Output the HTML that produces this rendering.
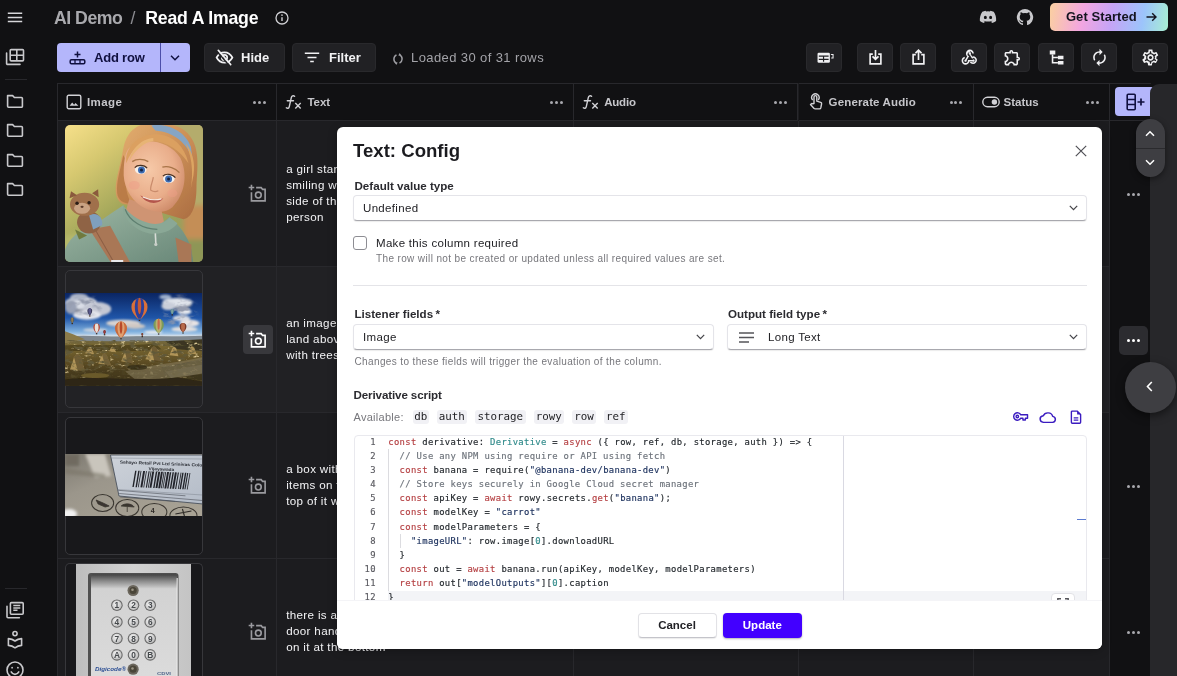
<!DOCTYPE html>
<html lang="en">
<head>
<meta charset="utf-8">
<title>Read A Image - Rowy</title>
<style>
*{box-sizing:border-box;margin:0;padding:0}
html,body{width:1177px;height:676px;overflow:hidden;background:#111113}
body{position:relative;font-family:"Liberation Sans",sans-serif;color:#e8e8ea;-webkit-font-smoothing:antialiased}
.abs{position:absolute}
svg{display:block}
/* ---------- left nav ---------- */
.navic{position:absolute;left:5px;width:20px;height:20px;fill:none;stroke:#c9c9cc;stroke-width:1.6;stroke-linejoin:round;stroke-linecap:round}
.navdiv{position:absolute;left:5px;width:22px;height:1px;background:#28282c}
/* ---------- top bar ---------- */
#title{position:absolute;left:53px;top:5px;height:26px;line-height:26px;font-size:17.700px;font-weight:700;white-space:nowrap;color:#fff;letter-spacing:.1px}
#title .dim{color:#a9a9ad}
#title .sl{color:#8c8c91;font-weight:400;padding:0 8px}
#getstarted{position:absolute;left:1050.300px;top:2.500px;width:117.800px;height:28.700px;border-radius:5px;background:linear-gradient(100deg,#fbd0a0 0%,#f3a6e0 28%,#c6a4f6 52%,#9cc4fb 78%,#a9efd2 100%);color:#14141f;font-size:13px;font-weight:700;line-height:28.700px;white-space:nowrap}
/* ---------- toolbar ---------- */
.tbtn{position:absolute;top:43px;height:29px;border-radius:4px;background:#212124;border:1px solid #29292c;color:#f1f1f3;font-size:13px;font-weight:700;line-height:27px;white-space:nowrap}
.tbtn svg{position:absolute}
.ibtn{position:absolute;top:43px;width:36px;height:29px;border-radius:4px;background:#212124;border:1px solid #29292c}
.ibtn svg{position:absolute;left:8px;top:4px;width:19px;height:19px;fill:#f1f1f3}
/* ---------- table ---------- */
#table{position:absolute;left:57px;top:83px;width:1053.200px;height:593px;background:#1c1c1f;border-left:1px solid #28282c}
.hd{position:absolute;top:0;height:38px;background:#111113;border-top:1px solid #28282c;border-bottom:1px solid #28282c;border-right:1px solid #28282c;color:#c6c6ca;font-size:11.5px;font-weight:700;line-height:36px;white-space:nowrap}
.hd .lbl{position:absolute;top:0}
.hd .dots{position:absolute;right:10.500px;top:16.500px;width:12.600px;height:3px}
.hd .dots i,.rowdots i{position:absolute;top:0;width:3px;height:3px;border-radius:50%;background:#a9a9ae}
.hd svg{position:absolute}
.vl{position:absolute;top:38px;width:1px;height:560px;background:#28282c}
.hl{position:absolute;left:0;width:1052.200px;height:1px;background:#28282c}
.thumb{position:absolute;left:6.500px;width:138px;height:138px;border:1px solid #37373b;border-radius:5px;overflow:hidden;background:#18181b}
.cam{position:absolute;left:190.300px;width:19px;height:18.600px}
.cell{position:absolute;left:228.200px;font-size:11.6px;line-height:16px;color:#f3f3f5;white-space:nowrap;letter-spacing:.35px}
.rowdots{position:absolute;left:1127px;width:13px;height:3px}
/* ---------- modal ---------- */
#modal{position:absolute;left:337px;top:126.5px;width:765px;height:522.5px;background:#fff;border-radius:6px;color:#1e1e22;overflow:hidden;box-shadow:0 2px 10px rgba(0,0,0,.25)}
#modal .lab{position:absolute;font-size:11.6px;font-weight:700;color:#2a2a2f;white-space:nowrap;line-height:14px}
#modal .sel{position:absolute;height:25.600px;border:1px solid #e4e4e9;border-bottom:1px solid #a8a8ae;border-radius:4px;background:#fff;font-size:11.500px;letter-spacing:.33px;line-height:24.600px;color:#222226;white-space:nowrap;box-shadow:0 1px 1px rgba(0,0,0,.08)}
#modal .hint{position:absolute;font-size:10px;letter-spacing:.37px;color:#77777c;white-space:nowrap;line-height:12px}
.chev{position:absolute;width:9px;height:6px;fill:none;stroke:#45454a;stroke-width:1.25}
.chip{position:absolute;top:283.200px;height:14.800px;border-radius:3px;background:#f1f1f5;font-family:"DejaVu Sans Mono","Liberation Mono",monospace;font-size:10.850px;line-height:14.800px;color:#222226;text-align:center}
#ed{position:absolute;left:16.5px;top:308px;width:733.5px;height:180px;border:1px solid #e9e9ee;border-radius:4px 4px 0 0;overflow:hidden;background:#fff}
#ed pre{position:absolute;margin:0;font-family:"DejaVu Sans Mono","Liberation Mono",monospace;font-size:8.9px;letter-spacing:.31px;line-height:14.16px;white-space:pre;color:#24292e;-webkit-text-stroke:.15px}
#ed .ln{left:0;top:-.9px;width:21.3px;text-align:right;color:#5a5a60}
#ed .code{left:33.800px;top:-.9px}
.k{color:#b54043}.s{color:#1a2f5c}.c{color:#6d737b}.t{color:#2f8a8a}.n{color:#2f8a8a}
</style>
</head>
<body>
<div id="root" style="position:absolute;left:0;top:0;width:1177px;height:676px;overflow:hidden;will-change:transform">
<!-- LEFT NAV -->
<div id="nav">
<svg class="abs" style="left:7px;top:12px;width:16px;height:12px" viewBox="0 0 16 12"><path d="M.8 1.300h14.400M.8 5.450h14.400M.8 9.600h14.400" stroke="#d6d6d9" stroke-width="1.500" fill="none"/></svg>
<svg class="navic" style="top:47px" viewBox="0 0 20 20"><path d="M6.2 2.6h11.3a1 1 0 0 1 1 1v9.3a1 1 0 0 1-1 1H6.2a1 1 0 0 1-1-1V3.6a1 1 0 0 1 1-1zM5.2 8.200h13.300M11.800 2.600v11.300M1.600 6v10.400a1 1 0 0 0 1 1H15"/></svg>
<div class="navdiv" style="top:79px"></div>
<svg class="navic" style="top:91px" viewBox="0 0 20 20"><path d="M2.6 4.6h5l1.8 1.9h7a1 1 0 0 1 1 1v7.7a1 1 0 0 1-1 1H3.6a1 1 0 0 1-1-1V4.6z"/></svg>
<svg class="navic" style="top:120.3px" viewBox="0 0 20 20"><path d="M2.6 4.6h5l1.8 1.9h7a1 1 0 0 1 1 1v7.7a1 1 0 0 1-1 1H3.6a1 1 0 0 1-1-1V4.6z"/></svg>
<svg class="navic" style="top:149.6px" viewBox="0 0 20 20"><path d="M2.6 4.6h5l1.8 1.9h7a1 1 0 0 1 1 1v7.7a1 1 0 0 1-1 1H3.6a1 1 0 0 1-1-1V4.6z"/></svg>
<svg class="navic" style="top:178.9px" viewBox="0 0 20 20"><path d="M2.6 4.6h5l1.8 1.9h7a1 1 0 0 1 1 1v7.7a1 1 0 0 1-1 1H3.6a1 1 0 0 1-1-1V4.6z"/></svg>
<div class="navdiv" style="top:588px"></div>
<svg class="navic" style="top:600px" viewBox="0 0 20 20"><path d="M6.4 2.6h10.8a1 1 0 0 1 1 1v9.6a1 1 0 0 1-1 1H6.4a1 1 0 0 1-1-1V3.6a1 1 0 0 1 1-1zM2 6.2v10.6a1 1 0 0 0 1 1h11.4"/><path d="M8.3 5.6h7M8.3 7.9h7M8.3 10.2h4.2" stroke-width="1.5" stroke-linecap="butt"/></svg>
<svg class="navic" style="top:629px" viewBox="0 0 20 20"><circle cx="10" cy="4.6" r="2.1"/><path d="M3.4 9.6c2.6.2 4.8 1 6.6 2.4 1.800-1.400 4-2.200 6.600-2.400v6.800c-2.600.2-4.800 1-6.600 2.400-1.800-1.400-4-2.200-6.600-2.400V9.600z"/></svg>
<svg class="navic" style="top:659.500px" viewBox="0 0 20 20"><circle cx="10" cy="10" r="8"/><path d="M6.200 11.900c.9 1.700 2.200 2.500 3.800 2.500s2.900-.8 3.800-2.500"/><circle cx="7.100" cy="7.700" r=".9" fill="#c9c9cc" stroke="none"/><circle cx="12.900" cy="7.700" r=".9" fill="#c9c9cc" stroke="none"/></svg>
</div>
<!-- TOP BAR -->
<div id="top">
<div id="title"><span class="dim abs" id="t1" style="left:1px;top:0;letter-spacing:-.5px">AI Demo</span><span class="abs" id="t2" style="left:77.500px;top:0;color:#8c8c91;font-weight:400">/</span><span class="abs" id="t3" style="left:92.300px;top:0;letter-spacing:-.22px">Read A Image</span></div>
<svg class="abs" style="left:274px;top:10px;width:16px;height:16px" viewBox="0 0 16 16"><circle cx="8" cy="8" r="6" fill="none" stroke="#d0d0d4" stroke-width="1.300"/><path d="M8 7.200v3.900" stroke="#d0d0d4" stroke-width="1.400"/><circle cx="8" cy="5.100" r=".85" fill="#d0d0d4"/></svg>
<svg class="abs" style="left:979px;top:9px;width:18px;height:16px" viewBox="0 0 24 20"><path fill="#c9c9cc" d="M19.600 2.900A18 18 0 0 0 15.200 1.500l-.55 1.100a16.800 16.800 0 0 0-5.300 0L8.800 1.500A18 18 0 0 0 4.400 2.900C1.600 7.100.85 11.200 1.200 15.200a18.200 18.200 0 0 0 5.500 2.800l1.150-1.900c-.65-.24-1.250-.54-1.850-.9l.45-.36c3.600 1.700 7.500 1.700 11.100 0l.45.360c-.6.360-1.200.660-1.850.9l1.150 1.900a18.200 18.200 0 0 0 5.500-2.800c.45-4.700-.75-8.700-3.200-12.300zM8.500 12.700c-1.050 0-1.950-1-1.950-2.200s.85-2.200 1.950-2.200 1.950 1 1.950 2.200-.85 2.200-1.950 2.200zm7 0c-1.050 0-1.950-1-1.950-2.200s.85-2.200 1.950-2.200 1.950 1 1.950 2.200-.85 2.200-1.950 2.200z"/></svg>
<svg class="abs" style="left:1016px;top:8px;width:18px;height:18px" viewBox="0 0 24 24"><path fill="#c9c9cc" d="M12 1.300A11 11 0 0 0 8.500 22.700c.55.100.75-.24.750-.53v-1.900c-3.050.66-3.700-1.450-3.700-1.450-.5-1.270-1.220-1.600-1.220-1.600-1-.68.080-.67.080-.67 1.100.080 1.680 1.130 1.680 1.130.98 1.680 2.570 1.200 3.200.91.100-.71.380-1.200.7-1.470-2.440-.28-5-1.220-5-5.430 0-1.200.430-2.180 1.130-2.950-.110-.28-.490-1.400.110-2.910 0 0 .920-.3 3.020 1.130a10.400 10.400 0 0 1 5.500 0c2.100-1.430 3.020-1.130 3.020-1.130.600 1.510.220 2.630.110 2.910.700.770 1.130 1.750 1.130 2.950 0 4.220-2.570 5.150-5.020 5.420.4.340.75 1.010.75 2.040v3.020c0 .29.200.640.760.530A11 11 0 0 0 12 1.300z"/></svg>
<div id="getstarted"><span class="abs" style="left:15.600px;top:0;letter-spacing:.08px">Get Started</span><svg class="abs" style="left:95.800px;top:9.400px;width:11px;height:10px" viewBox="0 0 11 10"><path d="M.5 5h9.500M6.200 1.200L10 5l-3.800 3.800" fill="none" stroke="#14141f" stroke-width="1.400"/></svg></div>
</div>
<!-- TOOLBAR -->
<div id="toolbar">
<div class="abs" style="left:57px;top:43px;width:133px;height:29px;border-radius:4px;background:#b4b6fb;color:#10103f;font-size:13px;font-weight:700;line-height:29px;white-space:nowrap">
<svg class="abs" style="left:12px;top:8px;width:17px;height:14px" viewBox="0 0 17 14"><path d="M8.500 .6v6M5.500 3.600h6" stroke="#10103f" stroke-width="1.500" fill="none"/><rect x="1.200" y="8.700" width="14.600" height="4" rx="1.200" fill="none" stroke="#10103f" stroke-width="1.500"/><path d="M6 8.700v4M11 8.700v4" stroke="#10103f" stroke-width="1.300"/></svg>
<span class="abs" style="left:37px;top:0;letter-spacing:-.2px">Add row</span>
<div class="abs" style="left:103px;top:0;width:1px;height:29px;background:#4c4eaa"></div>
<svg class="abs" style="left:113px;top:12px;width:10px;height:6px" viewBox="0 0 10 6"><path d="M1 .8l4 4 4-4" fill="none" stroke="#10103f" stroke-width="1.500"/></svg>
</div>
<div class="tbtn" style="left:204px;width:80.600px">
<svg style="left:10px;top:5px;width:19px;height:17px" viewBox="0 0 24 22"><g fill="none" stroke="#f1f1f3" stroke-width="2.200" stroke-linecap="round"><path d="M1.800 11C4 6.700 7.600 4.300 12 4.300S20 6.700 22.200 11C20 15.300 16.400 17.700 12 17.700S4 15.300 1.800 11z"/><circle cx="12" cy="11" r="3.500"/><path d="M4 1.800l16 18.400"/></g><path d="M2.300 3.200l16 18.400" stroke="#212124" stroke-width="1.800"/></svg>
<span class="abs" style="left:36px;top:0">Hide</span></div>
<div class="tbtn" style="left:292px;width:84px">
<svg style="left:11px;top:8px;width:16px;height:11px" viewBox="0 0 16 11"><path d="M.8 1.200h14.400M3.500 5.400h9M6.200 9.600h3.600" stroke="#f1f1f3" stroke-width="1.500" fill="none"/></svg>
<span class="abs" style="left:36px;top:0">Filter</span></div>
<svg class="abs" style="left:392px;top:52.500px;width:12px;height:12px" viewBox="0 0 12 12"><path d="M4.500 1.900A4.700 4.700 0 0 0 4.300 10.200M7.500 10.100A4.700 4.700 0 0 0 7.700 1.800" fill="none" stroke="#9d9da2" stroke-width="1.500"/><path d="M2.600 9.300l3.100 .2-1.400 2.400zM9.400 2.700L6.300 2.500 7.700 .1z" fill="#9d9da2"/></svg>
<div class="abs" style="left:411px;top:49px;font-size:13px;line-height:17px;color:#a3a3a8;white-space:nowrap;letter-spacing:.4px">Loaded 30 of 31 rows</div>
<div class="ibtn" style="left:806px"><svg viewBox="0 0 24 24"><rect x="3.200" y="6" width="15.600" height="12.600" rx="1.600"/><path d="M4.800 10.300h12.400M4.800 14.400h12.400M10.800 10.300v7" stroke="#212124" stroke-width="1.500" fill="none"/><path d="M20.300 8.300h2.500v4.400h-2.300M20.300 8.300v.1" stroke="#f1f1f3" stroke-width="1.300" fill="none"/></svg></div>
<div class="ibtn" style="left:857px"><svg viewBox="0 0 24 24" style="fill:none;stroke:#f1f1f3;stroke-width:2.100"><path d="M8.600 7.800H5.200v12.300h13.600V7.800h-3.400M12 2.500v11.500M8.200 10.600l3.800 3.800 3.800-3.800"/></svg></div>
<div class="ibtn" style="left:900px"><svg viewBox="0 0 24 24" style="fill:none;stroke:#f1f1f3;stroke-width:2.100"><path d="M8.600 8.300H5.200v11.800h13.600V8.300h-3.400M12 15V3M8.200 6.400L12 2.600l3.800 3.800"/></svg></div>
<div class="ibtn" style="left:951px"><svg viewBox="0 0 24 24"><path d="M10 15h5.880c.27-.31.67-.5 1.120-.5.830 0 1.500.67 1.500 1.500s-.67 1.500-1.500 1.500c-.44 0-.84-.19-1.120-.5H11.900c-.46 2.280-2.480 4-4.900 4-2.760 0-5-2.240-5-5 0-2.420 1.720-4.440 4-4.900v2.070C4.840 13.580 4 14.700 4 16c0 1.650 1.350 3 3 3s3-1.350 3-3v-1zm2.500-11c1.650 0 3 1.350 3 3h2c0-2.760-2.240-5-5-5s-5 2.240-5 5c0 1.430.6 2.710 1.550 3.620l-2.350 3.900c-.68.140-1.200.750-1.200 1.480 0 .830.670 1.500 1.500 1.500s1.500-.67 1.500-1.500c0-.16-.020-.31-.070-.450l3.380-5.630C10.490 10.610 9.500 9.420 9.500 8c0-1.650 1.350-3 3-3zm4.500 9c-.64 0-1.230.2-1.720.54l-3.050-5.070C11.530 8.350 11 7.740 11 7c0-.830.670-1.500 1.500-1.500S14 6.170 14 7c0 .15-.20.290-.60.430l2.190 3.650c.28-.50.570-.80.870-.80 2.760 0 5 2.240 5 5s-2.240 5-5 5c-1.850 0-3.470-1.010-4.330-2.500h2.670c.48.320 1.050.5 1.660.5 1.650 0 3-1.350 3-3s-1.350-3-3-3z"/></svg></div>
<div class="ibtn" style="left:994px"><svg viewBox="0 0 24 24"><path d="M10.500 4.500c.28 0 .5.220.5.5v2h6v6h2c.28 0 .5.220.5.5s-.22.5-.5.5h-2v6h-2.120c-.68-1.750-2.390-3-4.380-3s-3.700 1.250-4.380 3H4v-2.120c1.750-.68 3-2.390 3-4.380 0-1.990-1.240-3.700-2.990-4.380L4 7h6V5c0-.28.220-.5.500-.5m0-2C9.120 2.500 8 3.620 8 5H4c-1.100 0-1.990.9-1.990 2v3.800h.290c1.490 0 2.700 1.210 2.700 2.700s-1.210 2.700-2.700 2.700H2V20c0 1.100.9 2 2 2h3.800v-.3c0-1.490 1.210-2.700 2.700-2.700s2.700 1.210 2.700 2.700v.3H17c1.100 0 2-.9 2-2v-4c1.380 0 2.500-1.120 2.500-2.500S20.380 11 19 11V7c0-1.100-.9-2-2-2h-4c0-1.380-1.120-2.500-2.500-2.500z"/></svg></div>
<div class="ibtn" style="left:1038px"><svg viewBox="0 0 24 24"><path d="M3.500 3.200h7v5h-7zM13.800 9.800h7v4.400h-7zM13.800 16.500h7v4.400h-7z"/><path d="M7 8.200v10.500h6.800M7 12h6.800" fill="none" stroke="#f1f1f3" stroke-width="2"/></svg></div>
<div class="ibtn" style="left:1081px"><svg viewBox="0 0 24 24"><path d="M12 4V1L8 5l4 4V6c3.310 0 6 2.690 6 6 0 1.010-.25 1.970-.7 2.800l1.460 1.460C19.540 15.030 20 13.570 20 12c0-4.420-3.580-8-8-8zm0 14c-3.310 0-6-2.690-6-6 0-1.010.25-1.970.7-2.800L5.240 7.740C4.460 8.970 4 10.430 4 12c0 4.420 3.580 8 8 8v3l4-4-4-4v3z" transform="translate(24 0) scale(-1 1)"/></svg></div>
<div class="ibtn" style="left:1132px"><svg viewBox="0 0 24 24"><path d="M19.430 12.980c.04-.32.070-.64.070-.98 0-.34-.03-.66-.07-.98l2.110-1.650c.19-.15.240-.42.120-.64l-2-3.460c-.09-.16-.26-.25-.44-.25-.06 0-.12.010-.17.030l-2.490 1c-.52-.4-1.080-.73-1.690-.98l-.38-2.650C14.460 2.180 14.250 2 14 2h-4c-.25 0-.46.180-.49.420l-.38 2.650c-.61.250-1.170.59-1.690.98l-2.490-1c-.06-.02-.12-.03-.18-.03-.17 0-.34.090-.43.250l-2 3.460c-.13.220-.7.490.12.640l2.110 1.650c-.4.320-.7.650-.7.980 0 .330.030.660.070.98l-2.110 1.650c-.19.150-.24.420-.12.640l2 3.460c.9.160.26.250.44.250.06 0 .12-.1.170-.03l2.490-1c.52.4 1.080.730 1.690.98l.38 2.650c.3.240.24.420.49.420h4c.25 0 .46-.18.490-.42l.38-2.650c.61-.25 1.170-.59 1.690-.98l2.490 1c.6.020.12.030.18.030.17 0 .34-.9.430-.25l2-3.460c.12-.22.070-.49-.12-.64l-2.110-1.650zm-1.980-1.710c.4.310.5.520.5.730 0 .210-.2.430-.5.730l-.14 1.130.89.700 1.080.84-.7 1.210-1.270-.51-1.040-.42-.9.680c-.43.320-.84.560-1.250.73l-1.060.43-.16 1.130-.2 1.350h-1.400l-.19-1.350-.16-1.130-1.060-.43c-.43-.18-.83-.41-1.230-.71l-.91-.7-1.060.43-1.270.51-.7-1.210 1.080-.84.890-.7-.14-1.130c-.03-.31-.05-.54-.05-.74s.02-.43.05-.73l.14-1.130-.89-.7-1.080-.84.700-1.210 1.270.51 1.040.42.900-.68c.43-.32.840-.56 1.250-.73l1.060-.43.160-1.130.2-1.350h1.390l.19 1.350.16 1.130 1.060.43c.43.180.83.410 1.230.71l.91.700 1.060-.43 1.270-.51.700 1.210-1.070.85-.89.700.14 1.130zM12 8c-2.210 0-4 1.790-4 4s1.790 4 4 4 4-1.790 4-4-1.790-4-4-4zm0 6c-1.100 0-2-.9-2-2s.9-2 2-2 2 .9 2 2-.9 2-2 2z"/></svg></div>
</div>
<!-- TABLE -->
<div id="table">
<div class="hd" style="left:0;width:219.200px"><svg style="left:8px;top:10px;width:16px;height:16px" viewBox="0 0 16 16"><rect x="1.200" y="1.200" width="13.600" height="13.600" rx="1.500" fill="none" stroke="#d2d2d6" stroke-width="1.400"/><path d="M3.600 11.800l2.600-3.300 1.900 2.300 1.400-1.700 2.900 2.700z" fill="#d2d2d6"/></svg><span class="lbl" style="left:29px;letter-spacing:.4px">Image</span><span class="dots"><i style="left:0"></i><i style="left:4.800px"></i><i style="left:9.600px"></i></span></div>
<div class="hd" style="left:219.200px;width:297px"><svg style="left:8.300px;top:10px;width:18px;height:16px" viewBox="0 0 18 16"><path d="M9.600 2.300C8.300 1.200 6.700 1.700 6.300 3.600L4.300 12.600C3.900 14.400 2.500 14.700 1.300 13.800M2.300 6.800h6.200" fill="none" stroke="#d2d2d6" stroke-width="1.400" stroke-linecap="round"/><path d="M10.300 9l5.400 5.400M15.700 9l-5.400 5.400" fill="none" stroke="#d2d2d6" stroke-width="1.400"/></svg><span class="lbl" style="left:30.200px">Text</span><span class="dots"><i style="left:0"></i><i style="left:4.800px"></i><i style="left:9.600px"></i></span></div>
<div class="hd" style="left:516.200px;width:224.300px"><svg style="left:8.300px;top:10px;width:18px;height:16px" viewBox="0 0 18 16"><path d="M9.600 2.300C8.300 1.200 6.700 1.700 6.300 3.600L4.300 12.600C3.900 14.400 2.500 14.700 1.300 13.800M2.300 6.800h6.200" fill="none" stroke="#d2d2d6" stroke-width="1.400" stroke-linecap="round"/><path d="M10.300 9l5.400 5.400M15.700 9l-5.400 5.400" fill="none" stroke="#d2d2d6" stroke-width="1.400"/></svg><span class="lbl" style="left:30px;letter-spacing:-.2px">Audio</span><span class="dots"><i style="left:0"></i><i style="left:4.800px"></i><i style="left:9.600px"></i></span></div>
<div class="hd" style="left:740.500px;width:175.100px"><svg style="left:9.300px;top:8.200px;width:16px;height:18px" viewBox="0 0 16 18"><g fill="none" stroke="#d2d2d6" stroke-width="1.400" stroke-linejoin="round" stroke-linecap="round"><path d="M4.300 7.600A3.700 3.700 0 1 1 10.500 7.600"/><path d="M6 11.500V5a1.400 1.400 0 0 1 2.800 0v4.200l3.900 1.100a1.300 1.300 0 0 1 .9 1.500l-.8 4.100a1.300 1.300 0 0 1-1.300 1H7.200a1.500 1.500 0 0 1-1.100-.5l-3.600-3.800.7-.7a1.100 1.100 0 0 1 1.300-.2z"/></g></svg><span class="lbl" style="left:30.100px;letter-spacing:.15px">Generate Audio</span><span class="dots"><i style="left:0"></i><i style="left:4.800px"></i><i style="left:9.600px"></i></span></div>
<div class="hd" style="left:915.600px;width:136.600px"><svg style="left:8px;top:12.200px;width:18px;height:12px" viewBox="0 0 18 12"><rect x=".8" y="1.300" width="16.400" height="9.400" rx="4.700" fill="none" stroke="#d2d2d6" stroke-width="1.400"/><circle cx="12.400" cy="6" r="2.700" fill="#d2d2d6"/></svg><span class="lbl" style="left:29.900px">Status</span><span class="dots"><i style="left:0"></i><i style="left:4.800px"></i><i style="left:9.600px"></i></span></div>
<div class="hd" style="left:1052.200px;width:41px;border-right:0"></div>
<div class="abs" style="left:0;top:184px;width:1052.200px;height:145px;background:#212124"></div>
<div class="vl" style="left:218.200px"></div><div class="vl" style="left:515.200px"></div><div class="vl" style="left:739.500px"></div><div class="vl" style="left:914.600px"></div><div class="vl" style="left:1051.200px"></div>
<div class="hl" style="top:183px"></div><div class="hl" style="top:329px"></div><div class="hl" style="top:475px"></div>
<!-- row 1 -->
<div class="thumb" id="th1" style="border:0;left:7px;top:41.500px;width:137.500px;height:137.500px"><svg width="137.500" height="137.500" viewBox="0 0 137 137">
<defs>
<linearGradient id="g1bg" x1="0" y1="0" x2=".75" y2="1"><stop offset="0" stop-color="#f6e08a"/><stop offset=".26" stop-color="#d6c870"/><stop offset=".58" stop-color="#a2a65a"/><stop offset="1" stop-color="#949d5e"/></linearGradient>
<linearGradient id="g1hair" x1="0" y1="0" x2="1" y2="1"><stop offset="0" stop-color="#e4b070"/><stop offset=".5" stop-color="#cc9058"/><stop offset="1" stop-color="#aa6c40"/></linearGradient>
<radialGradient id="g1face" cx=".42" cy=".4" r=".7"><stop offset="0" stop-color="#f6c9a8"/><stop offset=".6" stop-color="#e9ad8a"/><stop offset="1" stop-color="#c98564"/></radialGradient>
<linearGradient id="g1hood" x1="0" y1="0" x2="1" y2="1"><stop offset="0" stop-color="#9db7a4"/><stop offset="1" stop-color="#678677"/></linearGradient>
<filter id="b1" x="-5%" y="-5%" width="110%" height="110%"><feGaussianBlur stdDeviation=".7"/></filter>
<filter id="b1s" x="-5%" y="-5%" width="110%" height="110%"><feGaussianBlur stdDeviation="2.500"/></filter>
</defs>
<rect width="137" height="137" fill="url(#g1bg)"/>
<g filter="url(#b1s)"><rect x="108" y="-4" width="34" height="84" fill="#b4ac6c"/><rect x="118" y="80" width="24" height="34" fill="#c48e56"/><rect x="118" y="114" width="24" height="30" fill="#8e9656"/><ellipse cx="10" cy="118" rx="14" ry="10" fill="#b5b86a"/></g>
<g filter="url(#b1)">
<!-- hair back -->
<path d="M88 -2C70 -2 61 8 58 24C55 42 50 54 50.500 66C51 77 58 81 67 79L118 94C127 92 131 80 131 62C132 40 135 22 122 8C114 0 102 -2 88 -2z" fill="url(#g1hair)"/>
<path d="M58 30C55 46 51 56 52 68C53 76 60 79 66 78C60 68 59 52 62 38z" fill="#b0703f" opacity=".7"/>
<!-- headband -->
<path d="M86 .5C102 -2 120 6 125.500 22L127 34C122 18 108 7 90 5.500z" fill="#86a5c4"/>
<path d="M120 18C128 34 128 54 124 70L128 50C130 38 127 26 120 18z" fill="#dca562"/>
<!-- neck -->
<path d="M64 74L96 84L100 104L74 106L60 88z" fill="#cf9473"/>
<!-- face -->
<path d="M63 24C74 11 104 14 115 33C123 50 119 70 107 82C99 89 86 87 76 81C64 73 57.500 59 58.500 45C59 35 60 28 63 24z" fill="url(#g1face)"/>
<!-- fringe -->
<path d="M61 32C64 17 78 8 94 9.500C108 11 119 21 123 38C114 25 102 17 88 16C76 16 67 23 61 38z" fill="#dba060"/>
<path d="M88 16C80 17 70 24 64 36C66 24 76 14 88 13z" fill="#e7b475"/>
<!-- brows, eyes -->
<path d="M67 36.500C71 33.500 78 33.500 83 36.500" stroke="#a87448" stroke-width="1.300" fill="none"/>
<path d="M97 42C103 40.500 110 43 114 47.500" stroke="#a87448" stroke-width="1.300" fill="none"/>
<ellipse cx="75.500" cy="44.500" rx="5.800" ry="4.200" fill="#f6f1ec"/><circle cx="76.200" cy="44.800" r="3.500" fill="#3c6cb2"/><circle cx="76.200" cy="44.800" r="1.500" fill="#132240"/><path d="M69.500 42.500C72 39.500 79 39.500 81.800 43" stroke="#4a3020" stroke-width="1.200" fill="none"/>
<ellipse cx="103.500" cy="53.500" rx="5.800" ry="4.200" fill="#f6f1ec"/><circle cx="103.200" cy="53.800" r="3.500" fill="#3c6cb2"/><circle cx="103.200" cy="53.800" r="1.500" fill="#132240"/><path d="M97.500 51C100 48 107 48.500 110 52.500" stroke="#4a3020" stroke-width="1.200" fill="none"/>
<!-- nose / mouth -->
<path d="M88 52C87 58 84.500 62 85.500 65C88 66.500 91 66.500 93 65.500" stroke="#c98b6b" stroke-width="1.200" fill="none"/>
<path d="M75 70C81 74 90 76.500 98 73C93 80 81 79 75 70z" fill="#b4564c"/><path d="M77.500 71.800C83 74.300 90 75.300 96 73.600" stroke="#f5e9e1" stroke-width="1.100" fill="none"/>
<ellipse cx="69" cy="60" rx="5.500" ry="4.200" fill="#ee9e88" opacity=".5"/><ellipse cx="107" cy="68" rx="5" ry="4" fill="#ee9e88" opacity=".45"/>
<!-- hoodie -->
<path d="M-2 137C-2 118 10 106 30 99L58 80C62 92 76 102 94 100L104 92C114 100 122 110 126 124L128 139z" fill="url(#g1hood)"/>
<path d="M58 80C56 90 66 104 84 108C98 110 108 104 112 98L104 92C98 100 88 100 78 96C68 92 62 86 58 80z" fill="#8aa896"/>
<path d="M60 84C64 96 78 104 92 104" stroke="#5f7f70" stroke-width="1.200" fill="none"/>
<path d="M90 108L90.500 118" stroke="#d7dcd6" stroke-width="1.600"/><circle cx="90.500" cy="119" r="1.600" fill="#c9cfc9"/>
<!-- straps -->
<path d="M24.500 104L45 100.500L66 139L47 139z" fill="#a97757"/><path d="M30 104L50 139" stroke="#8c5f44" stroke-width="1" fill="none"/>
<path d="M110 112L126 119L126 139L113.500 139z" fill="#a97757"/>
<!-- squirrel -->
<ellipse cx="24" cy="97" rx="12" ry="11" fill="#8f6345"/>
<path d="M24 90C32 86 38 92 37 100L28 104z" fill="#7f9fbe"/>
<ellipse cx="19.500" cy="79" rx="14.500" ry="11.500" fill="#a06f4c"/>
<path d="M4.500 73L6 66L12 70zM27 68L33 64L33.500 72z" fill="#8a5a3c"/>
<ellipse cx="17" cy="83" rx="8" ry="5.500" fill="#c9a283"/>
<circle cx="12" cy="78" r="1.700" fill="#2a1c14"/><circle cx="24" cy="77.500" r="1.700" fill="#2a1c14"/><ellipse cx="17" cy="81.500" rx="1.600" ry="1.100" fill="#5a3a2a"/>
<path d="M10 104L22 110L14 114z" fill="#6f7a3e"/>
</g>
<rect x="46" y="134.500" width="12" height="3" fill="#e9e9ec"/>
</svg></div>
<svg class="cam" style="top:101.200px" viewBox="0 0 20 20"><g fill="none" stroke="#9a9a9f" stroke-width="1.750"><path d="M3.500 .8v6M.5 3.800h6"/><path d="M3.500 8.800v9.400h14.700V5.800h-2.700L14 3.900H8.500"/><circle cx="10.900" cy="11.900" r="3.100"/></g></svg>
<div class="cell" style="top:78.300px">a girl standing and<br>smiling with a cat on the<br>side of the shoulder of a<br>person</div>
<!-- row 2 -->
<div class="thumb" id="th2" style="top:187.300px;background:#222225;overflow:visible"><svg width="137.500" height="92.500" viewBox="0 0 137 92" preserveAspectRatio="none" style="position:absolute;left:-.6px;top:21.800px">
<defs>
<linearGradient id="g2sky" x1="0" y1="0" x2="0" y2="1"><stop offset="0" stop-color="#0a2563"/><stop offset=".55" stop-color="#1f55a8"/><stop offset=".85" stop-color="#7fb0de"/><stop offset="1" stop-color="#dfe9f2"/></linearGradient>
<linearGradient id="g2land" x1="0" y1="0" x2="0" y2="1"><stop offset="0" stop-color="#66644a"/><stop offset=".18" stop-color="#7a6832"/><stop offset=".55" stop-color="#5a4a22"/><stop offset="1" stop-color="#2a2210"/></linearGradient>
<filter id="b2" x="-10%" y="-10%" width="120%" height="120%"><feGaussianBlur stdDeviation="1.300"/></filter>
<filter id="b2s" x="-5%" y="-5%" width="110%" height="110%"><feGaussianBlur stdDeviation=".45"/></filter><filter id="n2d" x="0" y="0" width="100%" height="100%"><feTurbulence type="fractalNoise" baseFrequency=".14 .28" numOctaves="3" seed="4"/><feColorMatrix values="0 0 0 0 .12  0 0 0 0 .1  0 0 0 0 .04  2.200 2.200 2.200 0 -3.300"/></filter><filter id="n2l" x="0" y="0" width="100%" height="100%"><feTurbulence type="fractalNoise" baseFrequency=".18 .34" numOctaves="3" seed="9"/><feColorMatrix values="0 0 0 0 .78  0 0 0 0 .64  0 0 0 0 .34  2.200 2.200 2.200 0 -3.700"/></filter><filter id="n2c" x="-10%" y="-10%" width="120%" height="120%"><feTurbulence type="fractalNoise" baseFrequency=".09 .16" numOctaves="3" seed="2" result="t"/><feColorMatrix in="t" values="0 0 0 0 .3  0 0 0 0 .33  0 0 0 0 .42  2 2 2 0 -3" result="c"/><feGaussianBlur in="SourceAlpha" stdDeviation="2" result="m"/><feComposite in="c" in2="m" operator="in"/></filter>
</defs>
<rect width="137" height="45" fill="url(#g2sky)"/>
<g filter="url(#b2)">
<ellipse cx="18" cy="14" rx="17" ry="7" fill="#5e6478"/><ellipse cx="112" cy="12" rx="14" ry="4.500" fill="#6a7288"/><ellipse cx="16" cy="10" rx="16" ry="6.500" fill="#d9dde6"/><ellipse cx="32" cy="16" rx="14" ry="7" fill="#c4c8d4"/><ellipse cx="22" cy="22" rx="14" ry="4.500" fill="#e6e8ee"/><ellipse cx="14" cy="4" rx="9" ry="3.500" fill="#aeb6c8"/><ellipse cx="6" cy="14" rx="6" ry="7" fill="#9aa2b6"/>
<ellipse cx="112" cy="9.500" rx="15" ry="4.500" fill="#dfe3ea"/><ellipse cx="103" cy="13" rx="7" ry="4" fill="#c9ced9"/><ellipse cx="119" cy="18.500" rx="7" ry="3" fill="#e4e7ed"/><ellipse cx="116" cy="25" rx="9" ry="2.800" fill="#d8dce4"/><ellipse cx="124" cy="30" rx="10" ry="3.500" fill="#e9e4e4"/><ellipse cx="119" cy="36" rx="13" ry="2.500" fill="#e6e2e0"/><ellipse cx="100" cy="4" rx="6" ry="2.500" fill="#9fb0cc"/>
<ellipse cx="58" cy="30" rx="17" ry="3.500" fill="#d6d2d0"/><ellipse cx="70" cy="33" rx="10" ry="2.500" fill="#cfc8c2"/><ellipse cx="30" cy="37" rx="12" ry="2" fill="#c9d2de"/><ellipse cx="88" cy="39" rx="9" ry="1.800" fill="#e3e8ee"/>
</g>
<ellipse cx="20" cy="13" rx="18" ry="9" filter="url(#n2c)"/><ellipse cx="114" cy="18" rx="16" ry="15" filter="url(#n2c)"/><rect y="41.500" width="137" height="3" fill="#cfdbe8" opacity=".9"/>
<rect y="43.500" width="137" height="48.500" fill="url(#g2land)"/>
<g filter="url(#b2s)">
<path d="M0 43.500C20 41 40 44 60 43.500C85 42.500 110 44 137 42.500V48C110 47 60 49 0 47z" fill="#7f8890"/>
<path d="M0 38L8 41L20 46L0 50z" fill="#8a7a4a"/>
<path d="M100 48L137 46V58L112 56z" fill="#3a3620"/><path d="M96 74L137 66V92H104z" fill="#2c281a"/><path d="M100 78L137 71V80L106 85z" fill="#7a756a" opacity=".8"/><path d="M0 52C30 50 60 54 90 50L96 56C60 60 30 56 0 58z" fill="#3a3218" opacity=".6"/>
<rect x="0" y="48" width="137" height="36" filter="url(#n2l)"/><g fill="#b09458"><path d="M5 76L9 64C11 60 14 60 16 64L20 78z"/><path d="M33 70L37 62C39 59 41 60 42 63L46 72z"/><path d="M56 68L60 58C62 55 64 56 65 59L68 70z"/><path d="M80 66L86 55C88 52 91 53 92 57L96 68z"/><path d="M104 62L107 55C108 53 110 53 111 56L113 63z"/><path d="M122 60L125 54C126 52 128 53 129 55L131 61z"/><path d="M20 60L23 55C24 53 26 54 27 56L29 61z"/><path d="M44 58L46 54C47 53 48 53 49 55L51 59z"/></g>
<g fill="#3a3018"><path d="M9 64C11 60 14 60 16 64L20 78L13 78z" opacity=".55"/><path d="M60 58C62 55 64 56 65 59L68 70L62 70z" opacity=".55"/><path d="M86 55C88 52 91 53 92 57L96 68L89 68z" opacity=".55"/><path d="M37 62C39 59 41 60 42 63L46 72L40 72z" opacity=".5"/></g>
<rect x="0" y="47" width="137" height="45" filter="url(#n2d)"/><path d="M0 80C20 74 50 78 80 76C100 75 120 70 137 66V92H0z" fill="#4a3e1e" opacity=".6"/>
<path d="M60 78C80 72 110 70 137 64V80C110 84 90 88 70 86z" fill="#8a8060" opacity=".55"/>
<path d="M0 86C30 82 70 88 112 84L137 88V92H0z" fill="#2e2612"/>
<ellipse cx="72" cy="74" rx="10" ry="2.500" fill="#2e2612" opacity=".7"/><ellipse cx="30" cy="82" rx="14" ry="2.500" fill="#6a5a2c"/>
<g><path d="M66.2 13.8A8 8.6 0 1 1 82.2 13.8C82.2 19.82 77.0 23.689999999999998 76.2 25.41L72.2 25.41C71.4 23.689999999999998 66.2 19.82 66.2 13.8z" fill="#d8703a"/><path d="M71.4 5.458000000000002C68.2 11.22 69.4 20.68 73.0 25.41L75.4 25.41C79.0 20.68 80.2 11.22 77.0 5.458000000000002z" fill="#2a3f9e"/><ellipse cx="74.2" cy="12.940000000000001" rx="1.76" ry="8.17" fill="#c85a30"/><rect x="73.5" y="26.7" width="1.400" height="1.200" fill="#3a2a1a"/></g><g><path d="M49.8 35A6 6.6 0 1 1 61.8 35C61.8 39.62 57.9 42.589999999999996 57.3 43.91L54.3 43.91C53.699999999999996 42.589999999999996 49.8 39.62 49.8 35z" fill="#c8683a"/><path d="M53.699999999999996 28.598C51.3 33.02 52.199999999999996 40.28 54.9 43.91L56.699999999999996 43.91C59.4 40.28 60.3 33.02 57.9 28.598z" fill="#e0a070"/><ellipse cx="55.8" cy="34.34" rx="1.32" ry="6.27" fill="#b84a2a"/><rect x="55.099999999999994" y="44.9" width="1.400" height="1.200" fill="#3a2a1a"/></g><g><path d="M88.1 31.5A5.2 5.8 0 1 1 98.5 31.5C98.5 35.56 95.11999999999999 38.17 94.6 39.33L92.0 39.33C91.48 38.17 88.1 35.56 88.1 31.5z" fill="#7a9a5a"/><path d="M91.48 25.874000000000002C89.39999999999999 29.76 90.17999999999999 36.14 92.52 39.33L94.08 39.33C96.42 36.14 97.2 29.76 95.11999999999999 25.874000000000002z" fill="#b8b070"/><ellipse cx="93.3" cy="30.92" rx="1.1440000000000001" ry="5.51" fill="#c86a4a"/><rect x="92.6" y="40.2" width="1.400" height="1.200" fill="#3a2a1a"/></g><g><path d="M28.2 34.2A3.3 3.8 0 1 1 34.8 34.2C34.8 36.86 32.655 38.57 32.325 39.330000000000005L30.675 39.330000000000005C30.345 38.57 28.2 36.86 28.2 34.2z" fill="#b84a3a"/><path d="M30.345 30.514000000000003C29.025 33.06 29.52 37.24 31.005 39.330000000000005L31.995 39.330000000000005C33.48 37.24 33.975 33.06 32.655 30.514000000000003z" fill="#e8e0d8"/><rect x="30.8" y="39.900000000000006" width="1.400" height="1.200" fill="#3a2a1a"/></g><g><path d="M114.19999999999999 33.6A3.4 3.7 0 1 1 121.0 33.6C121.0 36.19 118.78999999999999 37.855000000000004 118.44999999999999 38.595L116.75 38.595C116.41 37.855000000000004 114.19999999999999 36.19 114.19999999999999 33.6z" fill="#7a3a2a"/><path d="M116.41 30.011000000000003C115.05 32.49 115.55999999999999 36.56 117.08999999999999 38.595L118.11 38.595C119.64 36.56 120.14999999999999 32.49 118.78999999999999 30.011000000000003z" fill="#b86a4a"/><rect x="116.89999999999999" y="39.150000000000006" width="1.400" height="1.200" fill="#3a2a1a"/></g><g><path d="M22.3 18A2.4 2.8 0 1 1 27.099999999999998 18C27.099999999999998 19.96 25.54 21.22 25.3 21.78L24.099999999999998 21.78C23.86 21.22 22.3 19.96 22.3 18z" fill="#3a3a5a"/><path d="M23.86 15.284C22.9 17.16 23.259999999999998 20.24 24.34 21.78L25.06 21.78C26.14 20.24 26.5 17.16 25.54 15.284z" fill="#5a5a8a"/><rect x="24.0" y="22.2" width="1.400" height="1.200" fill="#3a2a1a"/></g><g><path d="M5.4 26.5A1.8 2.2 0 1 1 9.0 26.5C9.0 28.04 7.83 29.03 7.65 29.47L6.75 29.47C6.57 29.03 5.4 28.04 5.4 26.5z" fill="#5a5a4a"/><path d="M6.57 24.366C5.85 25.84 6.12 28.26 6.93 29.47L7.470000000000001 29.47C8.280000000000001 28.26 8.55 25.84 7.83 24.366z" fill="#8a7a5a"/><rect x="6.5" y="29.8" width="1.400" height="1.200" fill="#3a2a1a"/></g><g><path d="M38.1 38.5A1.3 1.6 0 1 1 40.699999999999996 38.5C40.699999999999996 39.62 39.855 40.34 39.725 40.66L39.074999999999996 40.66C38.945 40.34 38.1 39.62 38.1 38.5z" fill="#7a2a2a"/><path d="M38.945 36.948C38.425 38.02 38.62 39.78 39.205 40.66L39.595 40.66C40.18 39.78 40.375 38.02 39.855 36.948z" fill="#9a3a3a"/><rect x="38.699999999999996" y="40.9" width="1.400" height="1.200" fill="#3a2a1a"/></g><g><path d="M105.1 18.2A1.7 2 0 1 1 108.5 18.2C108.5 19.599999999999998 107.395 20.5 107.225 20.9L106.375 20.9C106.205 20.5 105.1 19.599999999999998 105.1 18.2z" fill="#5a8a8a"/><path d="M106.205 16.259999999999998C105.52499999999999 17.599999999999998 105.78 19.8 106.545 20.9L107.05499999999999 20.9C107.82 19.8 108.075 17.599999999999998 107.395 16.259999999999998z" fill="#7aa0a0"/><rect x="106.1" y="21.2" width="1.400" height="1.200" fill="#3a2a1a"/></g><g><path d="M76 41A1 1.2 0 1 1 78 41C78 41.84 77.35 42.38 77.25 42.62L76.75 42.62C76.65 42.38 76 41.84 76 41z" fill="#6a3a2a"/><path d="M76.65 39.836C76.25 40.64 76.4 41.96 76.85 42.62L77.15 42.62C77.6 41.96 77.75 40.64 77.35 39.836z" fill="#8a4a3a"/><rect x="76.3" y="42.8" width="1.400" height="1.200" fill="#3a2a1a"/></g>
</g>
</svg></div>
<div class="abs" style="left:185.200px;top:241.500px;width:30px;height:29.300px;border-radius:4px;background:#38383c"></div>
<svg class="cam" style="top:247.200px" viewBox="0 0 20 20"><g fill="none" stroke="#ffffff" stroke-width="1.750"><path d="M3.500 .8v6M.5 3.800h6"/><path d="M3.500 8.800v9.400h14.700V5.800h-2.700L14 3.900H8.500"/><circle cx="10.900" cy="11.900" r="3.100"/></g></svg>
<div class="cell" style="top:232.250px">an image of hot air balloons over a<br>land above the mountains<br>with trees and rocks</div>
<!-- row 3 -->
<div class="thumb" id="th3" style="top:333.500px;overflow:visible"><svg width="137.500" height="62" viewBox="0 0 137 62" preserveAspectRatio="none" style="position:absolute;left:-.6px;top:36.800px">
<defs>
<linearGradient id="g3bg" x1="0" y1="0" x2="1" y2="1"><stop offset="0" stop-color="#7d7970"/><stop offset=".35" stop-color="#9b968b"/><stop offset="1" stop-color="#aaa496"/></linearGradient>
<linearGradient id="g3lab" x1="0" y1="0" x2="1" y2="1"><stop offset="0" stop-color="#cdd2d9"/><stop offset="1" stop-color="#b4bcc8"/></linearGradient>
<filter id="b3" x="-5%" y="-5%" width="110%" height="110%"><feGaussianBlur stdDeviation=".4"/></filter>
<filter id="b3s" x="-10%" y="-10%" width="120%" height="120%"><feGaussianBlur stdDeviation="1.800"/></filter>
</defs>
<rect width="137" height="62" fill="url(#g3bg)"/>
<g filter="url(#b3s)"><path d="M20 0L40 0L46 22L30 24z" fill="#c9c5bc"/><path d="M0 14L40 20L40 24L0 20z" fill="#7a7468" opacity=".6"/><ellipse cx="4" cy="60" rx="8" ry="5" fill="#f1f1f1"/><rect x="0" y="0" width="14" height="12" fill="#6f6a60"/></g>
<g filter="url(#b3)">
<path d="M45.300 1L137.500 1L137.500 50L53.800 42z" fill="url(#g3lab)" stroke="#4a515c" stroke-width=".9"/>
<path d="M46.500 4L137 5M52 35.500L137 41" stroke="#6d7580" stroke-width=".5" fill="none" opacity=".8"/>
<g transform="rotate(2.200 95 10)" font-family="Liberation Sans, sans-serif" font-weight="700" fill="#2c2f36">
<text x="54.500" y="11" font-size="4.400" textLength="88" lengthAdjust="spacingAndGlyphs">Sahayo Retail Pvt Ltd Srinivas Colony</text>
<text x="83.500" y="16.600" font-size="4.400" textLength="25.500" lengthAdjust="spacingAndGlyphs">Vijayawada</text>
</g>
<g transform="translate(1.500 17.800) rotate(2.500 95 8) skewX(-7)" fill="#22242a"><rect x="68.00" y="0" width="1.4" height="16.500"/><rect x="71.10" y="0" width="1.4" height="16.500"/><rect x="73.50" y="0" width="0.8" height="16.500"/><rect x="76.00" y="0" width="1.9" height="16.500"/><rect x="78.90" y="0" width="0.8" height="16.500"/><rect x="81.40" y="0" width="1.1" height="16.500"/><rect x="83.50" y="0" width="0.8" height="16.500"/><rect x="85.10" y="0" width="1.9" height="16.500"/><rect x="88.70" y="0" width="1.4" height="16.500"/><rect x="91.10" y="0" width="1.9" height="16.500"/><rect x="93.80" y="0" width="1.9" height="16.500"/><rect x="96.50" y="0" width="0.8" height="16.500"/><rect x="98.10" y="0" width="0.8" height="16.500"/><rect x="99.90" y="0" width="1.9" height="16.500"/><rect x="102.60" y="0" width="1.4" height="16.500"/><rect x="105.30" y="0" width="1.4" height="16.500"/><rect x="107.70" y="0" width="1.9" height="16.500"/><rect x="110.60" y="0" width="1.1" height="16.500"/><rect x="113.40" y="0" width="0.8" height="16.500"/><rect x="115.00" y="0" width="1.4" height="16.500"/><rect x="117.70" y="0" width="1.4" height="16.500"/><rect x="119.90" y="0" width="1.1" height="16.500"/><rect x="122.30" y="0" width="0.8" height="16.500"/></g>
<g stroke="#4a4f58" stroke-width=".7" opacity=".85"><path d="M53 36.300L120 41.800M54 39.500L137 46.500M55 43L110 47.500"/></g>
<g fill="none" stroke="#3a3630" stroke-width="1"><ellipse cx="37.500" cy="49" rx="11" ry="8.500"/><ellipse cx="62" cy="54" rx="11.500" ry="8.500"/><ellipse cx="89" cy="58" rx="12.500" ry="8.500"/><ellipse cx="118" cy="61.500" rx="13.500" ry="8.500"/></g>
<path d="M31 46L38 49L44 52L40 53L33 50zM56 52C59 49 66 49 69 53zM62 53V58" fill="#3a3630" stroke="#3a3630" stroke-width=".8"/>
<text x="85.500" y="59" font-family="Liberation Sans, sans-serif" font-weight="700" font-size="7" fill="#2e2a26">4</text>
<path d="M110 60L126 57M117 55L119 62" stroke="#2e2a26" stroke-width="1.100"/>
</g>
</svg></div>
<svg class="cam" style="top:393.200px" viewBox="0 0 20 20"><g fill="none" stroke="#9a9a9f" stroke-width="1.750"><path d="M3.500 .8v6M.5 3.800h6"/><path d="M3.500 8.800v9.400h14.700V5.800h-2.700L14 3.900H8.500"/><circle cx="10.900" cy="11.900" r="3.100"/></g></svg>
<div class="cell" style="top:378px">a box with a label and<br>items on the side and the<br>top of it with a barcode</div>
<!-- row 4 -->
<div class="thumb" id="th4" style="top:479.500px;height:120px;border-bottom:0;border-radius:5px 5px 0 0"><svg width="115" height="137" viewBox="0 0 115 137" style="position:absolute;left:10.500px;top:-1.400px">
<defs>
<linearGradient id="g4pl" x1="0" y1="0" x2="1" y2="0"><stop offset="0" stop-color="#bdbdbd"/><stop offset=".5" stop-color="#d2d2d2"/><stop offset="1" stop-color="#c4c4c4"/></linearGradient>
<linearGradient id="g4in" x1="0" y1="0" x2="0" y2="1"><stop offset="0" stop-color="#454545"/><stop offset=".05" stop-color="#8a8a8a"/><stop offset=".11" stop-color="#d2d2d2"/><stop offset="1" stop-color="#dedede"/></linearGradient>
<radialGradient id="g4btn" cx=".4" cy=".35" r=".8"><stop offset="0" stop-color="#f4f4f4"/><stop offset="1" stop-color="#b4b4b4"/></radialGradient>
<filter id="b4" x="-5%" y="-5%" width="110%" height="110%"><feGaussianBlur stdDeviation=".35"/></filter>
</defs>
<rect width="115" height="137" fill="url(#g4pl)"/>
<g filter="url(#b4)">
<rect x="12" y="11" width="90.500" height="130" rx="3" fill="#505050"/>
<rect x="15" y="12.500" width="86" height="130" rx="2" fill="url(#g4in)"/>
<rect x="100.500" y="16" width="1.500" height="125" fill="#f2f2f2" opacity=".7"/>
<circle cx="57.100" cy="28.500" r="5.600" fill="#6b665c"/><circle cx="57.100" cy="28.500" r="3.600" fill="#4a4438"/><circle cx="56.500" cy="27.800" r="1.300" fill="#9a9484"/>
<circle cx="40.9" cy="43.2" r="5.800" fill="#6a6a6a"/><circle cx="40.9" cy="43.2" r="4.700" fill="url(#g4btn)"/><text x="40.9" y="46.2" text-anchor="middle" font-size="8.300" font-weight="700" fill="#45484c" font-family="Liberation Sans, sans-serif">1</text><circle cx="57.5" cy="43.2" r="5.800" fill="#6a6a6a"/><circle cx="57.5" cy="43.2" r="4.700" fill="url(#g4btn)"/><text x="57.5" y="46.2" text-anchor="middle" font-size="8.300" font-weight="700" fill="#45484c" font-family="Liberation Sans, sans-serif">2</text><circle cx="74.2" cy="43.2" r="5.800" fill="#6a6a6a"/><circle cx="74.2" cy="43.2" r="4.700" fill="url(#g4btn)"/><text x="74.2" y="46.2" text-anchor="middle" font-size="8.300" font-weight="700" fill="#45484c" font-family="Liberation Sans, sans-serif">3</text><circle cx="40.9" cy="60" r="5.800" fill="#6a6a6a"/><circle cx="40.9" cy="60" r="4.700" fill="url(#g4btn)"/><text x="40.9" y="63.0" text-anchor="middle" font-size="8.300" font-weight="700" fill="#45484c" font-family="Liberation Sans, sans-serif">4</text><circle cx="57.5" cy="60" r="5.800" fill="#6a6a6a"/><circle cx="57.5" cy="60" r="4.700" fill="url(#g4btn)"/><text x="57.5" y="63.0" text-anchor="middle" font-size="8.300" font-weight="700" fill="#45484c" font-family="Liberation Sans, sans-serif">5</text><circle cx="74.2" cy="60" r="5.800" fill="#6a6a6a"/><circle cx="74.2" cy="60" r="4.700" fill="url(#g4btn)"/><text x="74.2" y="63.0" text-anchor="middle" font-size="8.300" font-weight="700" fill="#45484c" font-family="Liberation Sans, sans-serif">6</text><circle cx="40.9" cy="76.5" r="5.800" fill="#6a6a6a"/><circle cx="40.9" cy="76.5" r="4.700" fill="url(#g4btn)"/><text x="40.9" y="79.5" text-anchor="middle" font-size="8.300" font-weight="700" fill="#45484c" font-family="Liberation Sans, sans-serif">7</text><circle cx="57.5" cy="76.5" r="5.800" fill="#6a6a6a"/><circle cx="57.5" cy="76.5" r="4.700" fill="url(#g4btn)"/><text x="57.5" y="79.5" text-anchor="middle" font-size="8.300" font-weight="700" fill="#45484c" font-family="Liberation Sans, sans-serif">8</text><circle cx="74.2" cy="76.5" r="5.800" fill="#6a6a6a"/><circle cx="74.2" cy="76.5" r="4.700" fill="url(#g4btn)"/><text x="74.2" y="79.5" text-anchor="middle" font-size="8.300" font-weight="700" fill="#45484c" font-family="Liberation Sans, sans-serif">9</text><circle cx="40.9" cy="92.9" r="5.800" fill="#6a6a6a"/><circle cx="40.9" cy="92.9" r="4.700" fill="url(#g4btn)"/><text x="40.9" y="95.9" text-anchor="middle" font-size="8.300" font-weight="700" fill="#45484c" font-family="Liberation Sans, sans-serif">A</text><circle cx="57.5" cy="92.9" r="5.800" fill="#6a6a6a"/><circle cx="57.5" cy="92.9" r="4.700" fill="url(#g4btn)"/><text x="57.5" y="95.9" text-anchor="middle" font-size="8.300" font-weight="700" fill="#45484c" font-family="Liberation Sans, sans-serif">0</text><circle cx="74.2" cy="92.9" r="5.800" fill="#6a6a6a"/><circle cx="74.2" cy="92.9" r="4.700" fill="url(#g4btn)"/><text x="74.2" y="95.9" text-anchor="middle" font-size="8.300" font-weight="700" fill="#45484c" font-family="Liberation Sans, sans-serif">B</text>
<circle cx="57.100" cy="107.200" r="5.600" fill="#6b665c"/><circle cx="57.100" cy="107.200" r="3.600" fill="#4a4438"/><circle cx="56.500" cy="106.500" r="1.300" fill="#9a9484"/>
<text x="19" y="109.200" font-family="Liberation Sans, sans-serif" font-style="italic" font-weight="700" font-size="5.800" fill="#2c4f94" textLength="31" lengthAdjust="spacingAndGlyphs">Digicode®</text>
<text x="81" y="113" font-family="Liberation Sans, sans-serif" font-weight="700" font-size="4" fill="#4a6088" textLength="14" lengthAdjust="spacingAndGlyphs">CDVI</text>
</g>
</svg></div>
<svg class="cam" style="top:539.200px" viewBox="0 0 20 20"><g fill="none" stroke="#9a9a9f" stroke-width="1.750"><path d="M3.500 .8v6M.5 3.800h6"/><path d="M3.500 8.800v9.400h14.700V5.800h-2.700L14 3.900H8.500"/><circle cx="10.900" cy="11.900" r="3.100"/></g></svg>
<div class="cell" style="top:524px">there is a keypad with a<br>door handle and buttons<br>on it at the bottom</div>
</div>
<!-- add column + row menus -->
<div class="abs" style="left:1115px;top:86.500px;width:40px;height:29.500px;border-radius:4px;background:#b4b6fb"><svg class="abs" style="left:11px;top:6px;width:20px;height:18px" viewBox="0 0 20 18"><rect x="1.200" y="1.200" width="8" height="15.600" rx="1" fill="none" stroke="#10103f" stroke-width="1.600"/><path d="M1.200 6.400h8M1.200 11.600h8" stroke="#10103f" stroke-width="1.500"/><path d="M15 5.500v7M11.500 9h7" stroke="#10103f" stroke-width="1.700"/></svg></div>
<span class="rowdots" style="top:192.5px"><i style="left:0;background:#a9a9ae"></i><i style="left:5px;background:#a9a9ae"></i><i style="left:10px;background:#a9a9ae"></i></span>
<div class="abs" style="left:1118.500px;top:325.500px;width:29.500px;height:29px;border-radius:5px;background:#2c2c30"></div>
<span class="rowdots" style="top:338.5px"><i style="left:0;background:#ffffff"></i><i style="left:5px;background:#ffffff"></i><i style="left:10px;background:#ffffff"></i></span>
<span class="rowdots" style="top:484.5px"><i style="left:0;background:#a9a9ae"></i><i style="left:5px;background:#a9a9ae"></i><i style="left:10px;background:#a9a9ae"></i></span>
<span class="rowdots" style="top:630.5px"><i style="left:0;background:#a9a9ae"></i><i style="left:5px;background:#a9a9ae"></i><i style="left:10px;background:#a9a9ae"></i></span>

<!-- DRAWER -->
<div id="drawer">
<div class="abs" style="left:1150px;top:84px;width:40px;height:600px;border-radius:9px 0 0 0;background:#27272a"></div>
<div class="abs" style="left:1135.500px;top:119px;width:29px;height:58px;border-radius:14.500px;background:#3e3e42;box-shadow:0 2px 6px rgba(0,0,0,.45)"><div class="abs" style="left:0;top:28.500px;width:29px;height:1px;background:#2a2a2d"></div>
<svg class="abs" style="left:9.500px;top:11px;width:10px;height:7px" viewBox="0 0 10 7"><path d="M1 5.800l4-4 4 4" fill="none" stroke="#fff" stroke-width="1.500"/></svg>
<svg class="abs" style="left:9.500px;top:40px;width:10px;height:7px" viewBox="0 0 10 7"><path d="M1 1.200l4 4 4-4" fill="none" stroke="#fff" stroke-width="1.500"/></svg></div>
<div class="abs" style="left:1125px;top:361.500px;width:51px;height:51px;border-radius:50%;background:#3e3e42;box-shadow:0 3px 8px rgba(0,0,0,.5)"><svg class="abs" style="left:21px;top:19.500px;width:7px;height:11px" viewBox="0 0 7 11"><path d="M5.800 1L1.500 5.500 5.800 10" fill="none" stroke="#fff" stroke-width="1.600"/></svg></div>
</div>
<!-- MODAL -->
<div id="modal">
<div class="abs" style="left:16px;top:11px;font-size:18.600px;font-weight:700;line-height:26px;color:#1b1b1f;white-space:nowrap" id="mtitle">Text: Config</div>
<svg class="abs" style="left:738px;top:18px;width:12px;height:12px" viewBox="0 0 12 12"><path d="M.8 .8l10.400 10.400M11.200 .8L.8 11.200" stroke="#505056" stroke-width="1.200" fill="none"/></svg>
<div class="lab" style="left:17.500px;top:52px" id="l1">Default value type</div>
<div class="sel" style="left:16px;top:68.500px;width:734px"><span class="abs" style="left:9px;top:0" id="v1">Undefined</span><svg class="chev" style="left:715px;top:9px" viewBox="0 0 9 6"><path d="M.8 .9l3.700 3.700L8.200 .9"/></svg></div>
<div class="abs" style="left:16px;top:109.500px;width:13.500px;height:13.500px;border:1px solid #8d8d93;border-radius:3px;background:#fff"></div>
<div class="abs" style="left:39px;top:109.200px;font-size:11.500px;letter-spacing:.3px;line-height:15px;color:#222226;white-space:nowrap" id="cb1">Make this column required</div>
<div class="hint" style="left:39px;top:126.300px" id="h1">The row will not be created or updated unless all required values are set.</div>
<div class="abs" style="left:16px;top:158.500px;width:734px;height:1px;background:#e4e4e8"></div>
<div class="lab" style="left:17.500px;top:180px" id="l2">Listener fields&#8201;*</div>
<div class="sel" style="left:16px;top:197.500px;width:360.500px"><span class="abs" style="left:9px;top:0" id="v2">Image</span><svg class="chev" style="left:341.800px;top:8.700px" viewBox="0 0 9 6"><path d="M.8 .9l3.700 3.700L8.200 .9"/></svg></div>
<div class="hint" style="left:17.500px;top:229px" id="h2">Changes to these fields will trigger the evaluation of the column.</div>
<div class="lab" style="left:391px;top:180px" id="l3">Output field type&#8201;*</div>
<div class="sel" style="left:389.500px;top:197.500px;width:360.500px"><svg class="abs" style="left:11px;top:6.500px;width:15px;height:11px" viewBox="0 0 15 11"><path d="M0 1h15M0 5.500h15M0 10h10" stroke="#55555a" stroke-width="1.400" fill="none"/></svg><span class="abs" style="left:40.500px;top:0" id="v3">Long Text</span><svg class="chev" style="left:341.800px;top:8.700px" viewBox="0 0 9 6"><path d="M.8 .9l3.700 3.700L8.200 .9"/></svg></div>
<div class="lab" style="left:16.500px;top:261px;letter-spacing:-.12px" id="l4">Derivative script</div>
<div class="abs" style="left:16.500px;top:283px;font-size:11px;letter-spacing:.28px;line-height:15px;color:#77777c;white-space:nowrap" id="av">Available:</div>
<div class="chip" style="left:75.500px;width:16.500px">db</div>
<div class="chip" style="left:99.500px;width:30.500px">auth</div>
<div class="chip" style="left:138px;width:50.500px">storage</div>
<div class="chip" style="left:196.500px;width:30.500px">rowy</div>
<div class="chip" style="left:235px;width:24px">row</div>
<div class="chip" style="left:267px;width:23.500px">ref</div>
<svg class="abs" style="left:674.500px;top:282.800px;width:17px;height:15px" viewBox="0 0 18 16"><g fill="none" stroke="#3b1cc0" stroke-width="1.500" stroke-linejoin="round"><path d="M9.300 6.200a4 4 0 1 0 0 3.600h2.300v2h2.600v-2h2.300V6.200z"/><circle cx="5.600" cy="8" r="1.300"/></g></svg>
<svg class="abs" style="left:702px;top:284.200px;width:18px;height:12.800px" viewBox="0 0 18 14" preserveAspectRatio="none"><path d="M4.800 12.400a3.600 3.600 0 0 1-.5-7.170A4.900 4.900 0 0 1 13.700 5.900 3.300 3.300 0 0 1 13.500 12.400z" fill="none" stroke="#3b1cc0" stroke-width="1.500" stroke-linejoin="round"/></svg>
<svg class="abs" style="left:733.300px;top:283.600px;width:12px;height:14.300px" viewBox="0 0 13 16" preserveAspectRatio="none"><path d="M1.500 2.200a1 1 0 0 1 1-1h5.200l3.800 3.800v8.800a1 1 0 0 1-1 1h-8a1 1 0 0 1-1-1z" fill="none" stroke="#3b1cc0" stroke-width="1.500" stroke-linejoin="round"/><path d="M4 8.700h5M4 11.400h5" stroke="#3b1cc0" stroke-width="1.400"/><path d="M7.700 1.200l3.800 3.800h-3.800z" fill="#3b1cc0"/></svg>
<div id="ed">
<div class="abs" style="left:33.500px;top:155.200px;width:700px;height:14.200px;background:#f3f4f7"></div>
<div class="abs" style="left:33.500px;top:13.500px;width:1px;height:141.600px;background:#dcdce0"></div>
<div class="abs" style="left:45px;top:98.500px;width:1px;height:14.200px;background:#dcdce0"></div>
<div class="abs" style="left:488.500px;top:0;width:1px;height:180px;background:#d9d9e2"></div>
<div class="abs" style="left:722.500px;top:83px;width:11px;height:1.500px;background:#5b7bd0"></div>
<pre class="ln">1
2
3
4
5
6
7
8
9
10
11
12</pre>
<pre class="code"><span class="k">const</span> derivative: <span class="t">Derivative</span> = <span class="k">async</span> ({ row, ref, db, storage, auth }) =&gt; {
  <span class="c">// Use any NPM using require or API using fetch</span>
  <span class="k">const</span> banana = require(<span class="s">"@banana-dev/banana-dev"</span>)
  <span class="c">// Store keys securely in Google Cloud secret manager</span>
  <span class="k">const</span> apiKey = <span class="k">await</span> rowy.secrets.<span class="k">get</span>(<span class="s">"banana"</span>);
  <span class="k">const</span> modelKey = <span class="s">"carrot"</span>
  <span class="k">const</span> modelParameters = {
    <span class="s">"imageURL"</span>: row.image[<span class="n">0</span>].downloadURL
  }
  <span class="k">const</span> out = <span class="k">await</span> banana.run(apiKey, modelKey, modelParameters)
  <span class="k">return</span> out[<span class="s">"modelOutputs"</span>][<span class="n">0</span>].caption
}</pre>
<div class="abs" style="left:696.200px;top:157.200px;width:24px;height:24px;border:1px solid #e2e2e6;border-radius:4px;background:#fff"><svg class="abs" style="left:5px;top:4.200px;width:12px;height:12px" viewBox="0 0 12 12"><path d="M.8 4V.8H4M8 .8h3.200V4M11.200 8v3.200H8M4 11.200H.8V8" fill="none" stroke="#55555a" stroke-width="1.400"/></svg></div>
</div>
<div class="abs" style="left:0;top:473px;width:765.500px;height:50px;background:#fff;border-top:1px solid #f4f4f7"></div>
<div class="abs" style="left:300.500px;top:486.500px;width:79px;height:24.500px;border:1px solid #e2e2e6;border-bottom-color:#c4c4ca;border-radius:4px;background:#fff;font-size:11.500px;font-weight:700;line-height:22.500px;text-align:center;color:#222226;box-shadow:0 1px 1px rgba(0,0,0,.08)" id="bcancel">Cancel</div>
<div class="abs" style="left:385.800px;top:486.500px;width:79px;height:24.500px;border-radius:4px;background:#4200ff;font-size:11.500px;font-weight:700;line-height:24.500px;text-align:center;color:#fff;box-shadow:0 1px 2px rgba(0,0,0,.3)" id="bupdate">Update</div>
</div>
</div>
</body>
</html>
